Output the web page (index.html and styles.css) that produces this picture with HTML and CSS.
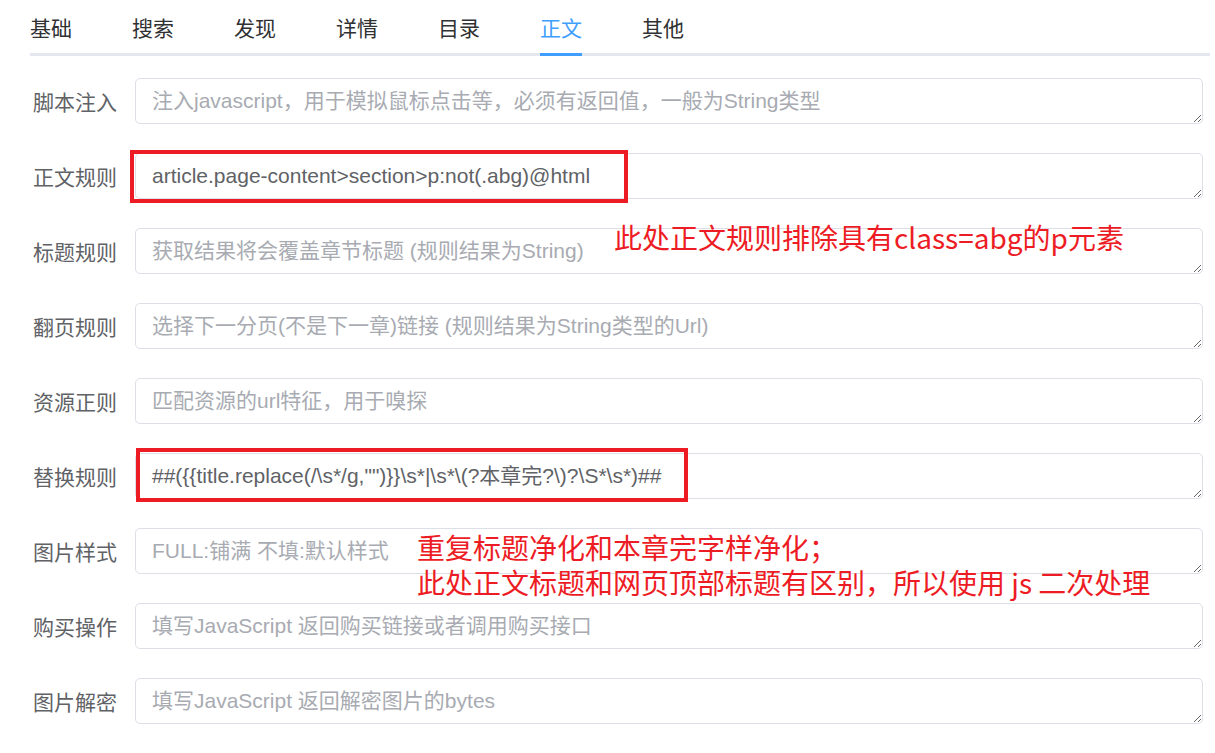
FILE: index.html
```html
<!DOCTYPE html>
<html lang="zh">
<head>
<meta charset="utf-8">
<title>正文</title>
<link rel="stylesheet" href="styles.css">
</head>
<body>
<div class="page">
  <div class="tabs">
    <div class="tab">基础</div>
    <div class="tab">搜索</div>
    <div class="tab">发现</div>
    <div class="tab">详情</div>
    <div class="tab">目录</div>
    <div class="tab active">正文</div>
    <div class="tab">其他</div>
  </div>

  <form class="form">
    <div class="row"><label class="label">脚本注入</label><textarea class="field" placeholder="注入javascript，用于模拟鼠标点击等，必须有返回值，一般为String类型"></textarea></div>
    <div class="row"><label class="label">正文规则</label><textarea class="field">article.page-content>section>p:not(.abg)@html</textarea></div>
    <div class="row"><label class="label">标题规则</label><textarea class="field" placeholder="获取结果将会覆盖章节标题 (规则结果为String)"></textarea></div>
    <div class="row"><label class="label">翻页规则</label><textarea class="field" placeholder="选择下一分页(不是下一章)链接 (规则结果为String类型的Url)"></textarea></div>
    <div class="row"><label class="label">资源正则</label><textarea class="field" placeholder="匹配资源的url特征，用于嗅探"></textarea></div>
    <div class="row"><label class="label">替换规则</label><textarea class="field">##({{title.replace(/\s*/g,"")}}\s*|\s*\(?本章完?\)?\S*\s*)##</textarea></div>
    <div class="row"><label class="label">图片样式</label><textarea class="field" placeholder="FULL:铺满 不填:默认样式"></textarea></div>
    <div class="row"><label class="label">购买操作</label><textarea class="field" placeholder="填写JavaScript 返回购买链接或者调用购买接口"></textarea></div>
    <div class="row"><label class="label">图片解密</label><textarea class="field" placeholder="填写JavaScript 返回解密图片的bytes"></textarea></div>
  </form>

  <div class="mark mark-1"></div>
  <div class="mark mark-2"></div>
  <div class="note note-1">此处正文规则排除具有class=abg的p元素</div>
  <div class="note note-2">重复标题净化和本章完字样净化；<br>此处正文标题和网页顶部标题有区别，所以使用 js 二次处理</div>
</div>
</body>
</html>
```

FILE: styles.css
```css
* { box-sizing: border-box; }
html, body { margin: 0; padding: 0; background: #fff; }
body {
  font-family: "Liberation Sans", "Noto Sans CJK SC", sans-serif;
  color: #303133;
}
.page {
  position: relative;
  width: 1215px;
  height: 753px;
  overflow: hidden;
}
.tabs {
  display: flex;
  gap: 60px;
  margin-left: 30px;
  width: 1180px;
  height: 56px;
  padding-top: 13px;
  border-bottom: 3px solid #e4e7ed;
}
.tab {
  width: 42px;
  font-size: 21px;
  line-height: 28px;
  height: 40px;
  font-family: "Noto Sans CJK SC", sans-serif;
  color: #303133;
  text-align: center;
}
.tab.active {
  color: #409eff;
  border-bottom: 3px solid #409eff;
  height: 43px;
}
.form {
  display: flex;
  flex-direction: column;
  gap: 29px;
  padding-top: 22px;
}
.row {
  display: flex;
  align-items: center;
}
.label {
  width: 135px;
  padding-left: 33px;
  font-size: 21px;
  font-family: "Noto Sans CJK SC", sans-serif;
  color: #606266;
  line-height: 28px;
}
.field {
  width: 1068px;
  height: 46px;
  padding: 8px 16px;
  border: 1px solid #dcdfe6;
  border-radius: 5px;
  font-family: "Liberation Sans", "Noto Sans CJK SC", sans-serif;
  font-size: 21px;
  line-height: 28px;
  color: #606266;
  resize: vertical;
  overflow: hidden;
  outline: none;
  background: #fff;
}
.field::placeholder {
  color: #a8abb2;
}
.mark {
  position: absolute;
  border: 4px solid #ed1c24;
}
.mark-1 { left: 130px; top: 150px; width: 498px; height: 53px; }
.mark-2 { left: 136px; top: 448px; width: 552px; height: 54px; }
.note {
  position: absolute;
  color: #ed1c24;
  font-family: "Noto Sans CJK SC", sans-serif;
  font-size: 28px;
  line-height: 35px;
  white-space: nowrap;
}
.note-1 { left: 614px; top: 220px; }
.note-2 { left: 417px; top: 530px; }
```
